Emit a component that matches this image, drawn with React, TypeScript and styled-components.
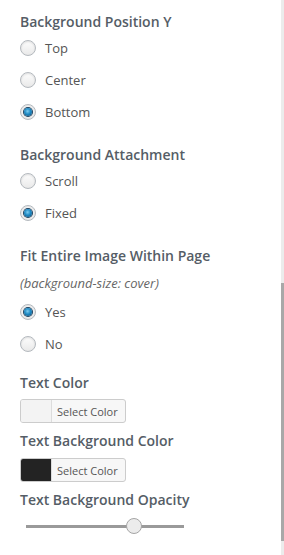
import React from 'react';
import styled, { createGlobalStyle } from 'styled-components';

const GlobalStyle = createGlobalStyle`
  html, body {
    margin: 0;
    padding: 0;
    background: #fff;
  }
  body {
    font-family: 'Open Sans', 'Liberation Sans', sans-serif;
    color: #555;
  }
`;

const Page = styled.div`
  display: flex;
  height: 555px;
  overflow: hidden;
`;

const Panel = styled.div`
  flex: 1;
  padding: 12px 20px 0;
`;

const Rail = styled.div`
  width: 3px;
  background: #ececec;
  display: flex;
  flex-direction: column;
`;

const RailThumb = styled.div`
  margin-top: 283px;
  height: 258px;
  background: #a8a8a8;
`;

const Section = styled.div<{ $gap: number }>`
  margin-bottom: ${(p) => p.$gap}px;
`;

const Title = styled.div<{ $after?: number }>`
  font-size: 14px;
  font-weight: 600;
  line-height: 20px;
  color: #555d66;
  margin-bottom: ${(p) => p.$after ?? 0}px;
`;

const Hint = styled.div`
  font-size: 13px;
  font-style: italic;
  line-height: 20px;
  color: #666;
  margin: 7px 0 3px;
`;

const RadioRow = styled.label`
  display: flex;
  align-items: center;
  height: 32px;
  gap: 9px;
  font-size: 13px;
  color: #555;
  cursor: pointer;
`;

const RadioDot = styled.span<{ $on?: boolean }>`
  box-sizing: border-box;
  width: 16px;
  height: 16px;
  border-radius: 50%;
  border: 1px solid #b4b9be;
  background: linear-gradient(#fdfdfd, #e9e9e9);
  box-shadow: inset 0 1px 2px rgba(0, 0, 0, 0.12);
  display: flex;
  align-items: center;
  justify-content: center;

  &::after {
    content: '';
    display: ${(p) => (p.$on ? 'block' : 'none')};
    width: 8px;
    height: 8px;
    border-radius: 50%;
    background: radial-gradient(circle at 45% 40%, #7ccbee 0%, #1f8ac4 45%, #0b4c78 100%);
    box-shadow: 0 0 0 1px #1c3f5c;
  }
`;

const ColorButton = styled.button`
  display: flex;
  align-items: stretch;
  height: 24px;
  padding: 0;
  border: 1px solid #ccc;
  border-radius: 3px;
  background: #f7f7f7;
  overflow: hidden;
  font-family: inherit;
  cursor: pointer;
`;

const Swatch = styled.span<{ $color: string }>`
  width: 30px;
  background: ${(p) => p.$color};
  border-right: 1px solid #dcdcdc;
`;

const ButtonText = styled.span`
  display: flex;
  align-items: center;
  padding: 0 7px 0 5px;
  font-size: 11px;
  color: #555;
`;

const SliderWrap = styled.div`
  padding: 8px 0 0 6px;
`;

const Track = styled.div`
  position: relative;
  width: 158px;
  height: 16px;
  display: flex;
  align-items: center;

  &::before {
    content: '';
    flex: 1;
    height: 3px;
    background: #9a9a9a;
  }
`;

const Knob = styled.span`
  position: absolute;
  top: 0;
  box-sizing: border-box;
  width: 16px;
  height: 16px;
  border-radius: 50%;
  border: 1px solid #a5a5a5;
  background: #ececec;
`;

type Option = { label: string; on?: boolean };

const RadioGroup = ({ name, options }: { name: string; options: Option[] }) => (
  <div>
    {options.map((o) => (
      <RadioRow key={name + o.label}>
        <RadioDot $on={o.on} />
        {o.label}
      </RadioRow>
    ))}
  </div>
);

export default function App() {
  const opacity = 0.705;
  return (
    <>
      <GlobalStyle />
      <Page>
        <Panel>
          <Section $gap={17}>
            <Title>Background Position Y</Title>
            <RadioGroup
              name="posy"
              options={[{ label: 'Top' }, { label: 'Center' }, { label: 'Bottom', on: true }]}
            />
          </Section>

          <Section $gap={17}>
            <Title>Background Attachment</Title>
            <RadioGroup name="attach" options={[{ label: 'Scroll' }, { label: 'Fixed', on: true }]} />
          </Section>

          <Section $gap={13}>
            <Title>Fit Entire Image Within Page</Title>
            <Hint>(background-size: cover)</Hint>
            <RadioGroup name="fit" options={[{ label: 'Yes', on: true }, { label: 'No' }]} />
          </Section>

          <Section $gap={8}>
            <Title $after={6}>Text Color</Title>
            <ColorButton>
              <Swatch $color="#f3f3f3" />
              <ButtonText>Select Color</ButtonText>
            </ColorButton>
          </Section>

          <Section $gap={8}>
            <Title $after={7}>Text Background Color</Title>
            <ColorButton>
              <Swatch $color="#232323" />
              <ButtonText>Select Color</ButtonText>
            </ColorButton>
          </Section>

          <Section $gap={0}>
            <Title>Text Background Opacity</Title>
            <SliderWrap>
              <Track>
                <Knob style={{ left: `${opacity * (158 - 16)}px` }} />
              </Track>
            </SliderWrap>
          </Section>
        </Panel>
        <Rail>
          <RailThumb />
        </Rail>
      </Page>
    </>
  );
}
